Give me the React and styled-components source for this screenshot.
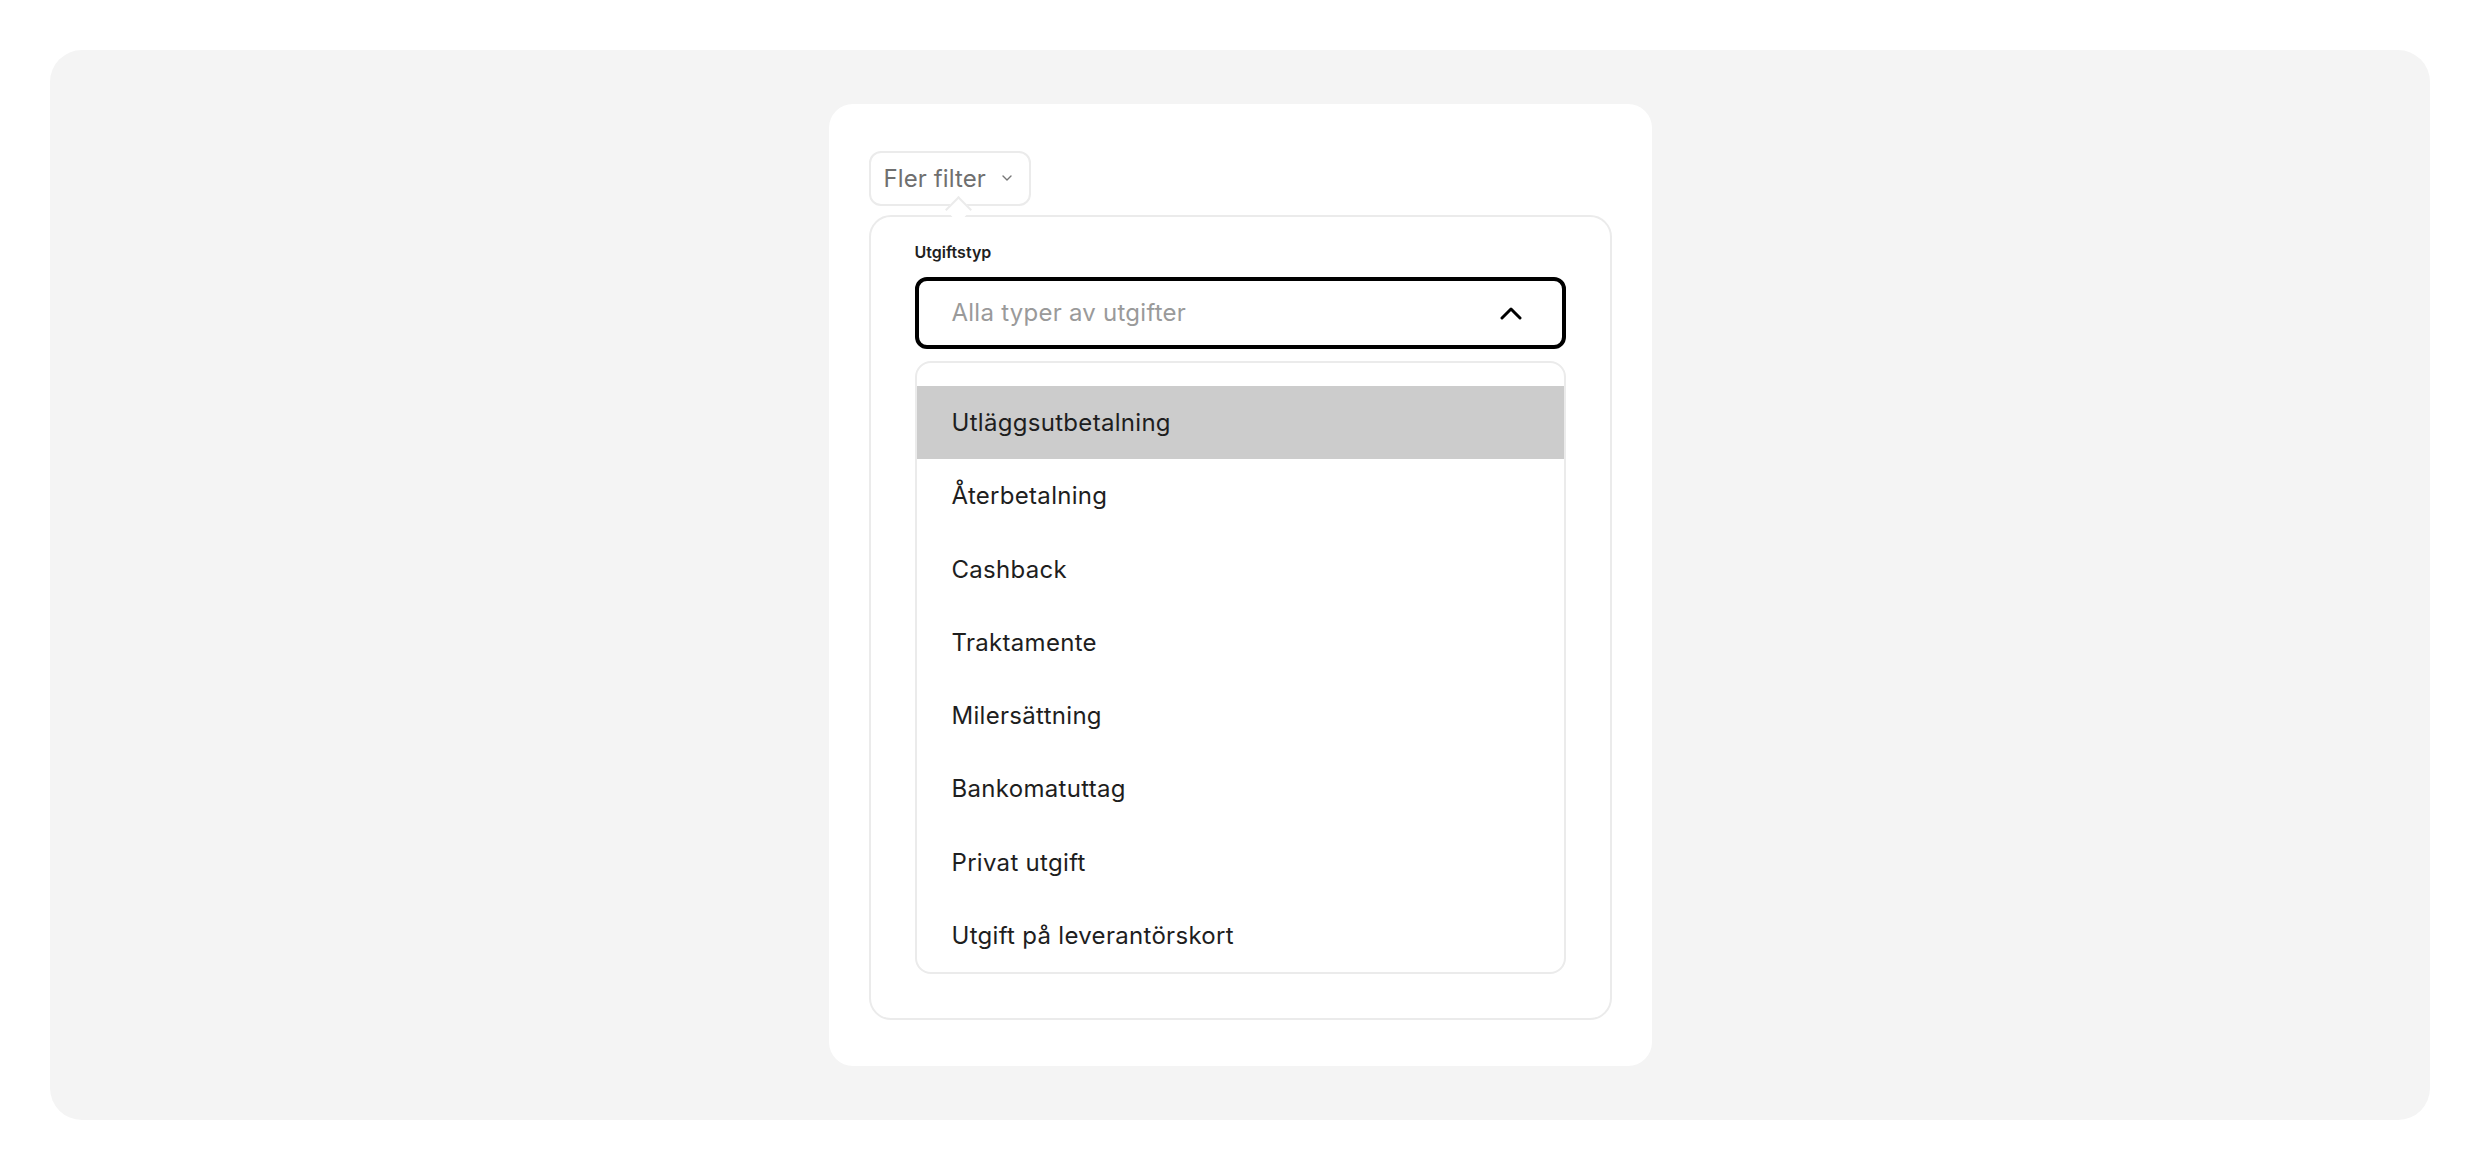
import React, { useState } from "react"
import styled, { createGlobalStyle } from "styled-components"

const GlobalStyle = createGlobalStyle`
  * { box-sizing: border-box; }
  body {
    margin: 0;
    background: #ffffff;
    font-family: Inter, "Noto Sans", "Liberation Sans", sans-serif;
  }
`

const Page = styled.div`
  padding: 50px;
`

const Stage = styled.div`
  height: 1070px;
  background: #f4f4f4;
  border-radius: 32px;
  display: flex;
  align-items: center;
  justify-content: center;
`

const Card = styled.div`
  width: 823px;
  background: #ffffff;
  border-radius: 24px;
  padding: 47px 40px 46px;
  display: flex;
  flex-direction: column;
  align-items: flex-start;
  gap: 9px;
`

const FilterButton = styled.button`
  height: 55px;
  padding: 0 17px 0 13px;
  display: flex;
  align-items: center;
  gap: 16px;
  background: #ffffff;
  border: 2px solid #ebebeb;
  border-radius: 12px;
  font-family: inherit;
  font-size: 24px;
  letter-spacing: 0.1px;
  color: #6f6f6f;
  cursor: pointer;
`

const Popover = styled.div`
  position: relative;
  width: 100%;
  border: 2px solid #ebebeb;
  border-radius: 22px;
  padding: 25px 44px 44px;
  background: #ffffff;
`

const Arrow = styled.span`
  position: absolute;
  top: -17px;
  left: 78px;
  width: 19px;
  height: 19px;
  background: #ffffff;
  border-top: 2px solid #ebebeb;
  border-left: 2px solid #ebebeb;
  transform: rotate(45deg);
`

const Label = styled.div`
  font-size: 16px;
  line-height: 20px;
  font-weight: 600;
  color: #1f1f1f;
  margin-bottom: 15px;
`

const Select = styled.div`
  height: 72px;
  border: 4px solid #000000;
  border-radius: 12px;
  display: flex;
  align-items: center;
  justify-content: space-between;
  padding: 0 40px 0 33px;
  font-size: 24px;
  letter-spacing: 0.25px;
  color: #9a9a9a;
`

const List = styled.ul`
  list-style: none;
  margin: 12px 0 0;
  padding: 23px 0 0;
  border: 2px solid #ebebeb;
  border-radius: 16px;
  overflow: hidden;
`

const Item = styled.li`
  height: 73.3px;
  display: flex;
  align-items: center;
  padding: 0 35px;
  font-size: 24px;
  letter-spacing: 0.3px;
  color: #1e1e1e;
  background: ${(p) => (p.$active ? "#cccccc" : "transparent")};
`

const ChevronDown = () => (
  <svg width="10" height="6" viewBox="0 0 10 6" fill="none">
    <path d="M1 1l4 4 4-4" stroke="#777" strokeWidth="1.4" strokeLinecap="round" strokeLinejoin="round" />
  </svg>
)

const ChevronUp = () => (
  <svg width="22" height="14" viewBox="0 0 22 14" fill="none">
    <path d="M2 12L11 3l9 9" stroke="#000" strokeWidth="3" strokeLinecap="round" strokeLinejoin="round" />
  </svg>
)

const types = [
  "Utläggsutbetalning",
  "Återbetalning",
  "Cashback",
  "Traktamente",
  "Milersättning",
  "Bankomatuttag",
  "Privat utgift",
  "Utgift på leverantörskort",
]

const App = () => {
  const [active] = useState(0)

  return (
    <Page>
      <GlobalStyle />
      <Stage>
        <Card>
          <FilterButton>
            Fler filter
            <ChevronDown />
          </FilterButton>
          <Popover>
            <Arrow />
            <Label>Utgiftstyp</Label>
            <Select>
              Alla typer av utgifter
              <ChevronUp />
            </Select>
            <List>
              {types.map((t, i) => (
                <Item key={t} $active={i === active}>
                  {t}
                </Item>
              ))}
            </List>
          </Popover>
        </Card>
      </Stage>
    </Page>
  )
}

export default App
